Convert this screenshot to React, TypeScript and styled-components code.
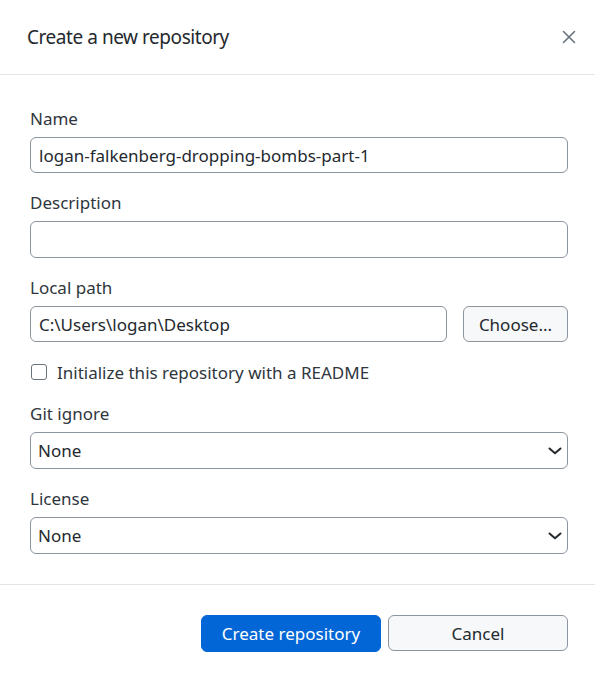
import React from "react";
import styled, { createGlobalStyle } from "styled-components";

const Global = createGlobalStyle`
  html, body { margin: 0; padding: 0; background: #ffffff; }
  body { font-family: "Noto Sans", "Open Sans", sans-serif; color: #24292e; }
  * { box-sizing: border-box; }
`;

const Dialog = styled.div`
  width: 595px;
  min-height: 676px;
  background: #fff;
  display: flex;
  flex-direction: column;
`;

const Header = styled.header`
  height: 75px;
  display: flex;
  align-items: center;
  justify-content: space-between;
  padding: 0 17px 0 27px;
  border-bottom: 1px solid #e1e4e8;
`;

const Title = styled.h1`
  margin: 0;
  font-size: 19px;
  letter-spacing: -0.45px;
  font-weight: 400;
  color: #24292e;
`;

const CloseButton = styled.button`
  border: none;
  background: transparent;
  width: 18px;
  height: 18px;
  padding: 0;
  display: flex;
  align-items: center;
  justify-content: center;
  color: #6a737d;
  cursor: pointer;
`;

const Body = styled.div`
  padding: 32px 27px 30px 30px;
  display: flex;
  flex-direction: column;
  gap: 18px;
  border-bottom: 1px solid #e1e4e8;
`;

const Field = styled.div`
  display: flex;
  flex-direction: column;
  gap: 6px;
`;

const Label = styled.label`
  font-size: 17px;
  line-height: 24px;
  color: #2f363d;
`;

const Input = styled.input<{ $tall?: boolean }>`
  display: block;
  height: ${(p) => (p.$tall ? 37 : 36)}px;
  width: 100%;
  min-width: 0;
  border: 1px solid #8c949d;
  border-radius: 6px;
  padding: 0 8px;
  font-family: inherit;
  font-size: 17px;
  color: #24292e;
  background: #fff;
  outline: none;
`;

const Row = styled.div`
  display: flex;
  gap: 16px;
  & > ${Input} {
    flex: 1;
  }
`;

const SecondaryButton = styled.button<{ $width: number }>`
  width: ${(p) => p.$width}px;
  flex: none;
  height: 36px;
  border: 1px solid #8c949d;
  border-radius: 6px;
  background: #f6f8fa;
  font-family: inherit;
  font-size: 17px;
  color: #24292e;
  cursor: pointer;
  padding: 0;
`;

const CheckRow = styled.label`
  display: flex;
  align-items: center;
  gap: 10px;
  height: 24px;
  font-size: 17px;
  color: #2f363d;
`;

const Box = styled.span`
  width: 16px;
  height: 16px;
  margin-left: 1px;
  border: 1px solid #6a737d;
  border-radius: 3px;
  background: #fff;
`;

const SelectWrap = styled.div`
  position: relative;
  height: 37px;
`;

const Select = styled.select`
  appearance: none;
  -webkit-appearance: none;
  display: block;
  width: 100%;
  height: 37px;
  border: 1px solid #8c949d;
  border-radius: 6px;
  padding: 0 30px 0 7px;
  font-family: inherit;
  font-size: 17px;
  color: #24292e;
  background: #fff;
  outline: none;
`;

const Chevron = styled.svg`
  position: absolute;
  right: 6px;
  top: 15px;
  pointer-events: none;
`;

const Footer = styled.footer`
  display: flex;
  justify-content: flex-end;
  gap: 7px;
  padding: 30px 27px 24px 30px;
`;

const PrimaryButton = styled.button`
  width: 180px;
  height: 37px;
  border: 1px solid #0366d6;
  border-radius: 6px;
  background: #0366d6;
  color: #fff;
  font-family: inherit;
  font-size: 17px;
  cursor: pointer;
  padding: 0;
`;

function ChevronIcon() {
  return (
    <Chevron width="14" height="8" viewBox="0 0 14 8">
      <path d="M1.5 1.5 L7 6.3 L12.5 1.5" fill="none" stroke="#24292e" strokeWidth="2" strokeLinecap="round" strokeLinejoin="round" />
    </Chevron>
  );
}

export default function App() {
  return (
    <>
      <Global />
      <Dialog>
        <Header>
          <Title>Create a new repository</Title>
          <CloseButton aria-label="Close">
            <svg width="14" height="14" viewBox="0 0 14 14">
              <path d="M1.5 1.5 L12.5 12.5 M12.5 1.5 L1.5 12.5" stroke="currentColor" strokeWidth="1.6" strokeLinecap="round" />
            </svg>
          </CloseButton>
        </Header>
        <Body>
          <Field>
            <Label>Name</Label>
            <Input defaultValue="logan-falkenberg-dropping-bombs-part-1" />
          </Field>
          <Field>
            <Label>Description</Label>
            <Input $tall defaultValue="" />
          </Field>
          <Field>
            <Label>Local path</Label>
            <Row>
              <Input defaultValue="C:\Users\logan\Desktop" />
              <SecondaryButton $width={105}>Choose...</SecondaryButton>
            </Row>
          </Field>
          <CheckRow>
            <Box />
            Initialize this repository with a README
          </CheckRow>
          <Field>
            <Label>Git ignore</Label>
            <SelectWrap>
              <Select defaultValue="None">
                <option>None</option>
              </Select>
              <ChevronIcon />
            </SelectWrap>
          </Field>
          <Field>
            <Label>License</Label>
            <SelectWrap>
              <Select defaultValue="None">
                <option>None</option>
              </Select>
              <ChevronIcon />
            </SelectWrap>
          </Field>
        </Body>
        <Footer>
          <PrimaryButton>Create repository</PrimaryButton>
          <SecondaryButton $width={180}>Cancel</SecondaryButton>
        </Footer>
      </Dialog>
    </>
  );
}
